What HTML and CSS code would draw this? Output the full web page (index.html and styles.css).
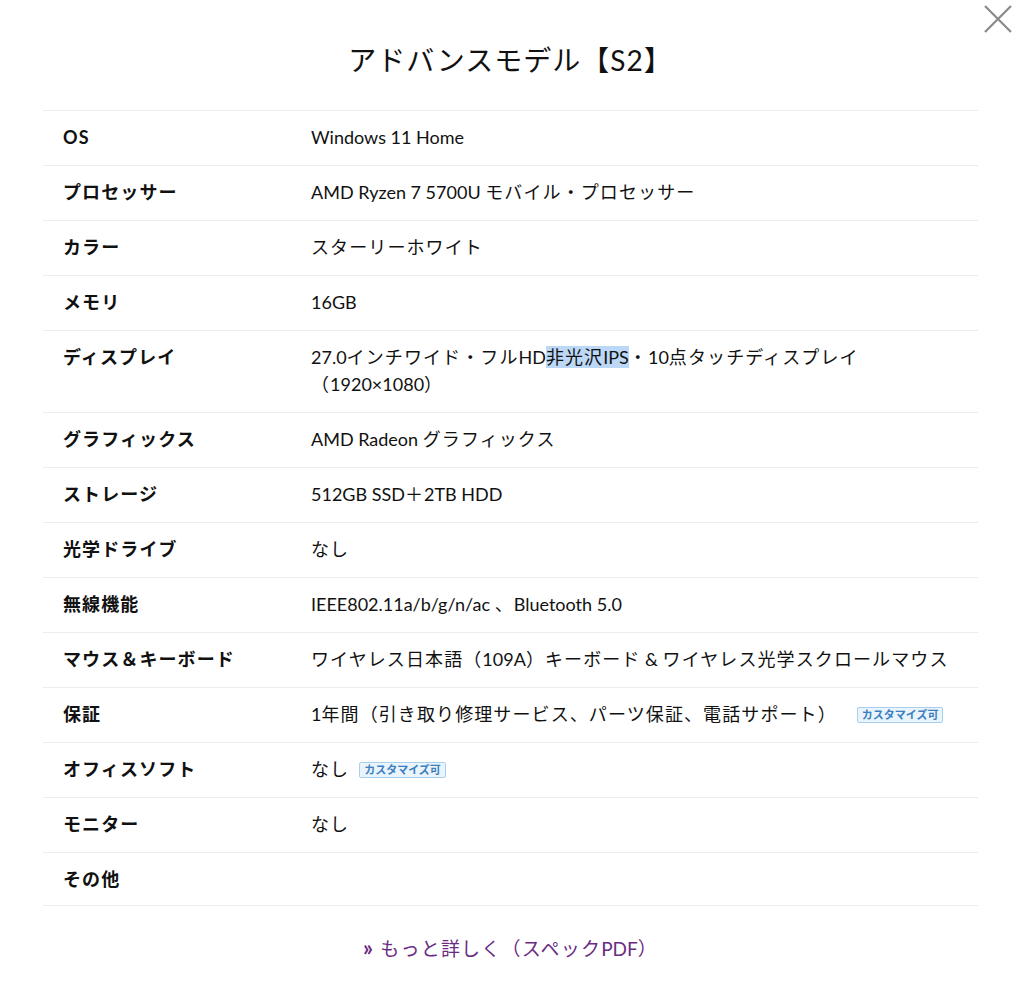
FILE: index.html
```html
<!DOCTYPE html>
<html lang="ja">
<head>
<meta charset="utf-8">
<title>アドバンスモデル【S2】</title>
<link rel="stylesheet" href="styles.css">
</head>
<body>
<div class="modal">
  <button class="close" aria-label="閉じる">
    <svg width="30" height="30" viewBox="0 0 30 30"><path d="M2 2 L28 28 M28 2 L2 28" stroke="#8a8a8a" stroke-width="2.2" fill="none"/></svg>
  </button>
  <h1 class="title">アドバンスモデル【S2】</h1>
  <div class="specs">
    <div class="row"><div class="label">OS</div><div class="value"><span class="lat">Windows 11 Home</span></div></div>
    <div class="row"><div class="label">プロセッサー</div><div class="value"><span class="lat">AMD Ryzen 7 5700U </span>モバイル・プロセッサー</div></div>
    <div class="row"><div class="label">カラー</div><div class="value">スターリーホワイト</div></div>
    <div class="row"><div class="label">メモリ</div><div class="value"><span class="lat">16GB</span></div></div>
    <div class="row"><div class="label">ディスプレイ</div><div class="value"><span class="lat">27.0</span>インチワイド・フル<span class="lat">HD</span><span class="sel">非光沢<span class="lat">IPS</span></span>・<span class="lat">10</span>点タッチディスプレイ<br>（<span class="lat">1920×1080</span>）</div></div>
    <div class="row"><div class="label">グラフィックス</div><div class="value"><span class="lat">AMD Radeon </span>グラフィックス</div></div>
    <div class="row"><div class="label">ストレージ</div><div class="value"><span class="lat">512GB SSD</span>＋<span class="lat">2TB HDD</span></div></div>
    <div class="row"><div class="label">光学ドライブ</div><div class="value">なし</div></div>
    <div class="row"><div class="label">無線機能</div><div class="value"><span class="lat">IEEE802.11a/b/g/n/ac </span>、<span class="lat">Bluetooth 5.0</span></div></div>
    <div class="row"><div class="label">マウス＆キーボード</div><div class="value">ワイヤレス日本語（<span class="lat">109A</span>）キーボード<span class="lat"> &amp; </span>ワイヤレス光学スクロールマウス</div></div>
    <div class="row"><div class="label">保証</div><div class="value"><span class="lat">1</span>年間（引き取り修理サービス、パーツ保証、電話サポート）<span class="badge badge-wide">カスタマイズ可</span></div></div>
    <div class="row"><div class="label">オフィスソフト</div><div class="value">なし<span class="badge">カスタマイズ可</span></div></div>
    <div class="row"><div class="label">モニター</div><div class="value">なし</div></div>
    <div class="row"><div class="label">その他</div><div class="value"></div></div>
  </div>
  <div class="more"><a href="#"><span class="raquo">»</span> もっと詳しく（スペック<span class="lat">PDF</span>）</a></div>
</div>
</body>
</html>
```
FILE: styles.css
```css
* { box-sizing: border-box; }
html, body { margin: 0; padding: 0; background: #fff; }
body {
  font-family: Lato, "Noto Sans CJK JP", "Noto Sans", sans-serif;
  color: #111;
  width: 1024px;
  height: 1003px;
  overflow: hidden;
}
.modal {
  width: 935px;
  margin-left: 43px;
}
.close {
  position: absolute;
  top: 4px;
  right: 11px;
  width: 30px;
  height: 30px;
  padding: 0;
  border: 0;
  background: none;
}
.title {
  margin: 0;
  height: 110px;
  padding-top: 38px;
  text-align: center;
  font-size: 28px;
  font-weight: 400;
  line-height: 44px;
  letter-spacing: 1px;
}
.specs { border-top: 1px solid #ececec; }
.row {
  display: grid;
  grid-template-columns: 248px 1fr;
  padding: 13px 20px 14px;
  border-bottom: 1px solid #ececec;
  font-size: 18px;
  line-height: 27px;
  letter-spacing: 1.1px;
}
.row:last-child { padding-bottom: 12px; }
.label { font-weight: 700; }
.value { font-weight: 400; }
.lat { letter-spacing: 0; }
.sel { background: #bcd8f6; }
.badge {
  display: inline-block;
  vertical-align: 2px;
  margin-left: 10px;
  padding: 0 4px;
  height: 16px;
  line-height: 14px;
  font-size: 11px;
  font-weight: 700;
  letter-spacing: 0;
  color: #3c7fc0;
  background: #e9f4fc;
  border: 1px solid #a8d0ee;
  border-radius: 2px;
}
.badge-wide { margin-left: 20px; }
.more {
  text-align: center;
  padding-top: 28px;
  font-size: 19px;
  line-height: 28px;
}
.more a {
  color: #6a2c82;
  text-decoration: none;
  letter-spacing: 1.2px;
}
.raquo { font-size: 22px; font-weight: 700; }
```
